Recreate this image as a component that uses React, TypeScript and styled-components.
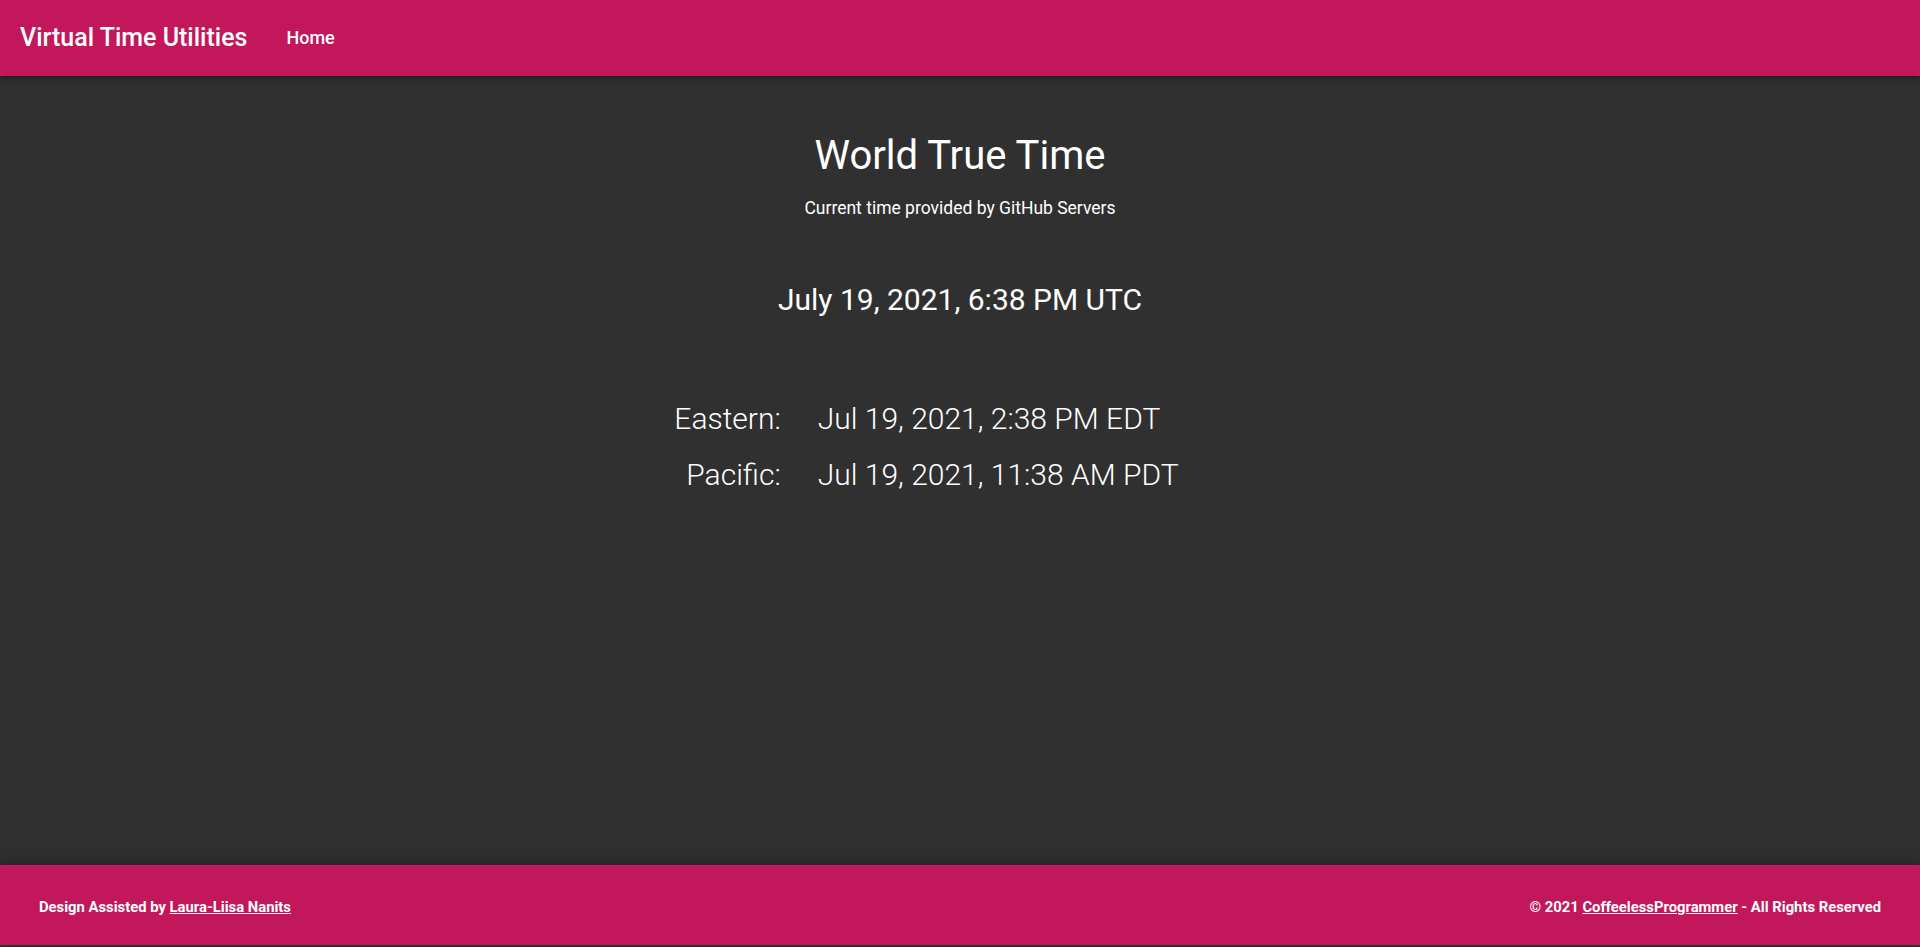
import React from "react";
import styled, { createGlobalStyle } from "styled-components";

const Global = createGlobalStyle`
  html, body {
    margin: 0;
    padding: 0;
    background: #303030;
    font-family: Roboto, "Noto Sans", Arial, sans-serif;
    color: #ffffff;
  }
  #root { min-height: 947px; }
`;

const Page = styled.div`
  display: flex;
  flex-direction: column;
  height: 947px;
  background: #303030;
`;

const Header = styled.header`
  height: 76px;
  flex: 0 0 76px;
  background: #c2185b;
  display: flex;
  align-items: center;
  padding: 0 20px;
  box-sizing: border-box;
  gap: 39px;
  position: relative;
  z-index: 2;
  box-shadow: 0 2px 4px -1px rgba(0,0,0,0.2), 0 4px 5px 0 rgba(0,0,0,0.14), 0 1px 10px 0 rgba(0,0,0,0.12);
`;

const Brand = styled.div`
  font-size: 25px;
  font-weight: 500;
  margin-top: -2px;
`;

const NavLink = styled.a`
  font-size: 18px;
  font-weight: 500;
  color: #fff;
  text-decoration: none;
  margin-top: -2px;
`;

const Main = styled.main`
  flex: 1 1 auto;
  display: flex;
  flex-direction: column;
  align-items: center;
  padding-top: 56px;
`;

const Title = styled.h1`
  margin: 0;
  font-size: 40px;
  font-weight: 400;
  line-height: normal;
`;

const Subtitle = styled.p`
  margin: 19px 0 0;
  font-size: 17.5px;
  font-weight: 400;
  line-height: normal;
`;

const UtcTime = styled.p`
  margin: 64px 0 0;
  font-size: 30px;
  font-weight: 400;
  line-height: normal;
`;

const Zones = styled.div`
  margin-top: 84px;
  display: grid;
  grid-template-columns: auto auto;
  column-gap: 37px;
  row-gap: 21px;
  padding-right: 67px;
`;

const ZoneLabel = styled.span`
  text-align: right;
  font-size: 30px;
  font-weight: 300;
  line-height: normal;
`;

const ZoneValue = styled.span`
  text-align: left;
  font-size: 30px;
  font-weight: 300;
  line-height: normal;
`;

const Footer = styled.footer`
  flex: 0 0 80px;
  height: 80px;
  margin-bottom: 2px;
  background: #c2185b;
  display: flex;
  align-items: center;
  justify-content: space-between;
  padding: 0 39px;
  box-sizing: border-box;
  font-size: 14.8px;
  font-weight: 700;
  box-shadow: 0 -4px 12px 0 rgba(0,0,0,0.25);
`;

const FooterText = styled.span`
  margin-top: 4px;
`;

const FooterLink = styled.a`
  color: #fff;
  text-decoration: underline;
`;

export default function App() {
  const zones = [
    { label: "Eastern:", value: "Jul 19, 2021, 2:38 PM EDT" },
    { label: "Pacific:", value: "Jul 19, 2021, 11:38 AM PDT" },
  ];
  return (
    <>
      <Global />
      <Page>
        <Header>
          <Brand>Virtual Time Utilities</Brand>
          <NavLink href="#">Home</NavLink>
        </Header>
        <Main>
          <Title>World True Time</Title>
          <Subtitle>Current time provided by GitHub Servers</Subtitle>
          <UtcTime>July 19, 2021, 6:38 PM UTC</UtcTime>
          <Zones>
            {zones.map((z) => (
              <React.Fragment key={z.label}>
                <ZoneLabel>{z.label}</ZoneLabel>
                <ZoneValue>{z.value}</ZoneValue>
              </React.Fragment>
            ))}
          </Zones>
        </Main>
        <Footer>
          <FooterText>
            Design Assisted by <FooterLink href="#">Laura-Liisa Nanits</FooterLink>
          </FooterText>
          <FooterText>
            © 2021 <FooterLink href="#">CoffeelessProgrammer</FooterLink> - All Rights Reserved
          </FooterText>
        </Footer>
      </Page>
    </>
  );
}
